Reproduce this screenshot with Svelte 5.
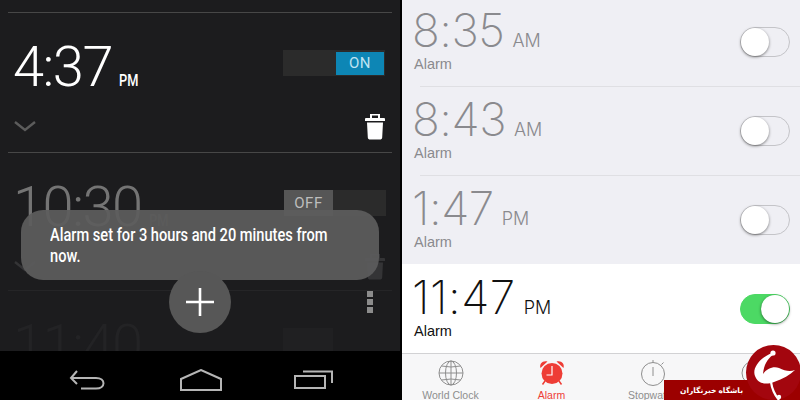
<script>
	const iosAlarms = [
		{ time: '8:35', period: 'AM' },
		{ time: '8:43', period: 'AM' },
		{ time: '1:47', period: 'PM' }
	];
</script>

{#snippet trash()}
	<svg width="20" height="28" viewBox="0 0 20 28" fill="currentColor"><path d="M7 2.500h6V5h2V1H5v4h2zM1 5h18a1 1 0 0 1 1 1v2H0V6a1 1 0 0 1 1-1zM2 9.500h16l-.8 15c-.1 1.500-1 2-2.500 2H5.300c-1.500 0-2.400-.5-2.500-2z" /></svg>
{/snippet}

{#snippet chevron()}
	<svg width="24" height="14" viewBox="0 0 24 14" fill="none" stroke="currentColor" stroke-width="2.400"><path d="M2 2l10 8 10-8" /></svg>
{/snippet}

<div class="screen">
	<section class="android">
		<div class="list">
			<div class="row first">
				<div class="top">
					<div class="clock"><span class="time">4:37</span><span class="ampm">PM</span></div>
					<div class="switch"><span class="track"></span><span class="thumb blue">ON</span></div>
				</div>
				<div class="actions">
					<span class="chev">{@render chevron()}</span>
					<span class="bin">{@render trash()}</span>
				</div>
			</div>
			<div class="row second">
				<div class="top">
					<div class="clock off"><span class="time">10:30</span><span class="ampm">PM</span></div>
					<div class="switch offsw"><span class="thumb grey">OFF</span><span class="track"></span></div>
				</div>
				<div class="actions dim">
					<span>{@render chevron()}</span>
					<span>{@render trash()}</span>
				</div>
			</div>
			<div class="row third">
				<div class="top">
					<div class="clock faint"><span class="time">11:40</span></div>
					<div class="switch offsw ghost"></div>
				</div>
			</div>
		</div>
		<nav class="softkeys">
			<svg width="40" height="20" viewBox="0 0 40 20" fill="none" stroke="#b5b5b5" stroke-width="2"><path d="M8 1L2 8l6 6M2 8h25c10 0 10 10.500 0 10.500H12" /></svg>
			<svg width="42" height="22" viewBox="0 0 42 22" fill="none" stroke="#b5b5b5" stroke-width="2"><path d="M1 10L21 1l20 9v11H1z" /></svg>
			<svg width="40" height="20" viewBox="0 0 40 20" fill="none" stroke="#b5b5b5" stroke-width="2"><path d="M2 6h30v12H2zM10 1.500h29V13" /></svg>
		</nav>
		<div class="toast"><div class="toast-text">Alarm set for 3 hours and 20 minutes from now.</div></div>
		<button class="fab" aria-label="Add alarm">
			<svg width="28" height="28" viewBox="0 0 28 28" fill="none" stroke="#fff" stroke-width="2.600"><path d="M14 0v28M0 14h28" /></svg>
		</button>
		<div class="overflow"><i></i><i></i><i></i></div>
	</section>

	<section class="ios">
		{#each iosAlarms as alarm}
			<div class="alarm">
				<div>
					<div class="clock2"><span class="t">{alarm.time}</span><span class="p">{alarm.period}</span></div>
					<div class="label">Alarm</div>
				</div>
				<span class="toggle"><span class="knob"></span></span>
			</div>
		{/each}
		<div class="alarm active">
			<div>
				<div class="clock2"><span class="t">11:47</span><span class="p">PM</span></div>
				<div class="label">Alarm</div>
			</div>
			<span class="toggle lit"><span class="knob"></span></span>
		</div>
		<div class="tabs">
			<div class="tab">
				<svg width="26" height="26" viewBox="0 0 26 26" fill="none" stroke="#8e8e8e" stroke-width="1"><circle cx="13" cy="13" r="12" /><ellipse cx="13" cy="13" rx="5.500" ry="12" /><path d="M13 1v24M1 13h24M3.500 6q9.500 2 19 0M3.500 20q9.500-2 19 0" /></svg>
				<span>World Clock</span>
			</div>
			<div class="tab red">
				<svg width="26" height="26" viewBox="0 0 26 26"><path fill="#ee3d36" d="M1.500 8C0 3.500 4 0 8.500 1.500zM24.500 8C26 3.500 22 0 17.500 1.500z" /><path stroke="#ee3d36" stroke-width="1.500" d="M6 21l-2.500 3.500M20 21l2.500 3.500" /><circle cx="13" cy="13.500" r="10.500" fill="#ee3d36" /><path d="M13 6v9H7.500" fill="none" stroke="#fff" stroke-width="1.200" /></svg>
				<span>Alarm</span>
			</div>
			<div class="tab">
				<svg width="26" height="26" viewBox="0 0 26 26" fill="none" stroke="#8e8e8e" stroke-width="1"><circle cx="13" cy="14" r="11.500" /><path d="M13 0v2.500M21.500 4.500l2-2M13 7v9" /></svg>
				<span>Stopwatch</span>
			</div>
			<div class="tab">
				<svg width="26" height="26" viewBox="0 0 26 26" fill="none" stroke="#8e8e8e" stroke-width="1"><circle cx="13" cy="13" r="12" /></svg>
				<span>Timer</span>
			</div>
		</div>
		<div class="brand">
			<span class="ribbon" dir="rtl">باشگاه خبرنگاران</span>
			<span class="disc">
				<svg width="55" height="55" viewBox="0 0 55 55"><path fill="#fff" d="M26 8C13 13 6 24 9 31c3 8 11 9 19 6 9-3 16-7 21-12-5 2-10 1-16-2-5-2-12 0-16 6 1-9 4-15 10-19z" /><path fill="none" stroke="#fff" stroke-width="2.200" d="M25 37c1 7 3 12 8 18" /><circle cx="27" cy="8" r="2.600" fill="#fff" /><circle cx="33" cy="52" r="2.200" fill="#fff" /></svg>
			</span>
		</div>
	</section>
</div>

<style>
	:global(body) {
		margin: 0;
		background: #000;
	}

	.screen {
		display: flex;
		width: 800px;
		height: 400px;
		overflow: hidden;
	}

	.android {
		position: relative;
		display: flex;
		flex-direction: column;
		width: 400px;
		height: 400px;
		background: #1c1c1e;
		font-family: Roboto, sans-serif;
	}

	.list {
		flex: 1;
		padding: 0 8px;
		min-height: 0;
	}

	.row {
		border-top: 1px solid #474747;
		padding: 0 7px 0 5px;
		box-sizing: border-box;
	}

	.first {
		margin-top: 12px;
		height: 140px;
	}

	.second {
		height: 138px;
	}

	.third {
		height: 61px;
		border-top-color: #252527;
		overflow: hidden;
	}

	.top {
		display: flex;
		justify-content: space-between;
		align-items: flex-start;
	}

	.clock {
		display: flex;
		align-items: baseline;
		margin-top: 20px;
		color: #fff;
		font-weight: 300;
	}

	.time {
		font-size: 56px;
		line-height: 68px;
		letter-spacing: -1.5px;
	}

	.ampm {
		font-size: 16px;
		font-weight: 500;
		margin-left: 7px;
		transform: scaleX(0.8);
		transform-origin: left;
	}

	.off {
		color: #747474;
	}

	.off .ampm {
		color: #4c4c4c;
	}

	.faint {
		color: #232325;
	}

	.switch {
		display: flex;
		width: 102px;
		height: 26px;
		margin-top: 37px;
		background: #2b2b2b;
		align-items: center;
	}

	.offsw {
		margin-right: -1px;
	}

	.ghost {
		width: 50px;
		margin-right: 52px;
		background: #202022;
	}

	.track {
		flex: 1;
	}

	.thumb {
		font-size: 15px;
		text-align: center;
		letter-spacing: 0.5px;
	}

	.blue {
		width: 48px;
		height: 23px;
		line-height: 23px;
		background: #0d86b5;
		color: #bfe3f2;
		margin-right: 1px;
	}

	.grey {
		width: 49px;
		height: 26px;
		line-height: 26px;
		background: #565656;
		color: #bdbdbd;
	}

	.actions {
		display: flex;
		justify-content: space-between;
		align-items: center;
		margin-top: 12px;
	}

	.chev {
		color: #5c5c5c;
	}

	.bin {
		color: #fff;
	}

	.dim {
		color: #343436;
	}

	.actions span {
		display: flex;
	}

	.softkeys {
		display: flex;
		justify-content: space-between;
		align-items: center;
		box-sizing: border-box;
		height: 49px;
		padding: 8px 67px 0 69px;
		background: #000;
	}

	.toast {
		position: absolute;
		left: 21px;
		top: 210px;
		width: 358px;
		height: 70px;
		box-sizing: border-box;
		padding: 14px 0 0 29px;
		border-radius: 22px;
		background: rgba(92, 92, 92, 0.93);
		overflow: hidden;
	}

	.toast-text {
		width: 350px;
		color: #fff;
		font-size: 18px;
		font-weight: 500;
		line-height: 21px;
		transform: scaleX(0.812);
		transform-origin: left top;
	}

	.fab {
		position: absolute;
		left: 169px;
		top: 271px;
		width: 62px;
		height: 62px;
		padding: 0;
		border: 0;
		border-radius: 50%;
		background: #575757;
		display: flex;
		align-items: center;
		justify-content: center;
	}

	.overflow {
		position: absolute;
		left: 367px;
		top: 291px;
		display: flex;
		flex-direction: column;
		gap: 2px;
	}

	.overflow i {
		display: block;
		width: 6px;
		height: 6px;
		background: #8c8c8c;
	}

	.ios {
		position: relative;
		display: flex;
		flex-direction: column;
		width: 398px;
		height: 400px;
		margin-left: 2px;
		background: #efeff4;
		font-family: Inter, 'Liberation Sans', sans-serif;
		overflow: hidden;
	}

	.alarm {
		display: flex;
		justify-content: space-between;
		align-items: flex-start;
		height: 89px;
		box-sizing: border-box;
		padding: 9px 10px 0 12px;
		background: linear-gradient(#dfdfe3, #dfdfe3) right bottom / 380px 1px no-repeat;
		color: #8a8a8e;
	}

	.alarm:first-child {
		height: 87px;
		padding-top: 7px;
	}

	.alarm:nth-child(3) {
		height: 88px;
		background: none;
	}

	.active {
		padding-top: 10px;
		background: #fff;
		color: #111;
	}

	.clock2 {
		display: flex;
		align-items: baseline;
		height: 48px;
		line-height: 46px;
	}

	.t {
		margin-left: -2px;
		font-size: 46px;
		font-weight: 150;
		letter-spacing: -0.5px;
	}

	.active .t {
		letter-spacing: 0.5px;
	}

	.p {
		font-size: 18px;
		font-weight: 300;
		margin-left: 8px;
	}

	.label {
		font-family: 'Liberation Sans', sans-serif;
		font-size: 14.500px;
		line-height: 18px;
	}

	.toggle {
		position: relative;
		display: block;
		width: 48px;
		height: 28px;
		margin-top: 20px;
		border: 1px solid #c4c4c8;
		border-radius: 15px;
	}

	.knob {
		position: absolute;
		left: 0;
		top: 0;
		width: 28px;
		height: 28px;
		border-radius: 50%;
		background: #fff;
		box-shadow: 0 1px 3px rgba(0, 0, 0, 0.5);
	}

	.lit {
		background: #4cd964;
		border-color: #4cd964;
	}

	.lit .knob {
		left: 20px;
	}

	.tabs {
		flex: 1;
		display: grid;
		grid-template-columns: repeat(4, 101px);
		background: #f7f7f8;
		border-top: 1px solid #d2d2d4;
		margin-left: -2px;
		min-height: 0;
	}

	.tab {
		display: flex;
		flex-direction: column;
		align-items: center;
		gap: 3px;
		padding-top: 6px;
		font-family: 'Liberation Sans', sans-serif;
		font-size: 10.500px;
		color: #8e8e8e;
		white-space: nowrap;
	}

	.red {
		color: #ee3d36;
	}

	.brand {
		position: absolute;
		right: 0;
		bottom: 0;
		width: 136px;
		height: 55px;
	}

	.ribbon {
		position: absolute;
		left: 0;
		right: 0;
		bottom: 0;
		height: 20px;
		padding-right: 57px;
		background: #9c0000;
		color: #fff;
		font-family: 'Noto Sans', 'DejaVu Sans', sans-serif;
		font-size: 7.500px;
		font-weight: 700;
		line-height: 20px;
		white-space: nowrap;
	}

	.disc {
		position: absolute;
		right: -1px;
		top: 0;
		width: 55px;
		height: 55px;
		border-radius: 50%;
		background: #a3060e;
	}
</style>
